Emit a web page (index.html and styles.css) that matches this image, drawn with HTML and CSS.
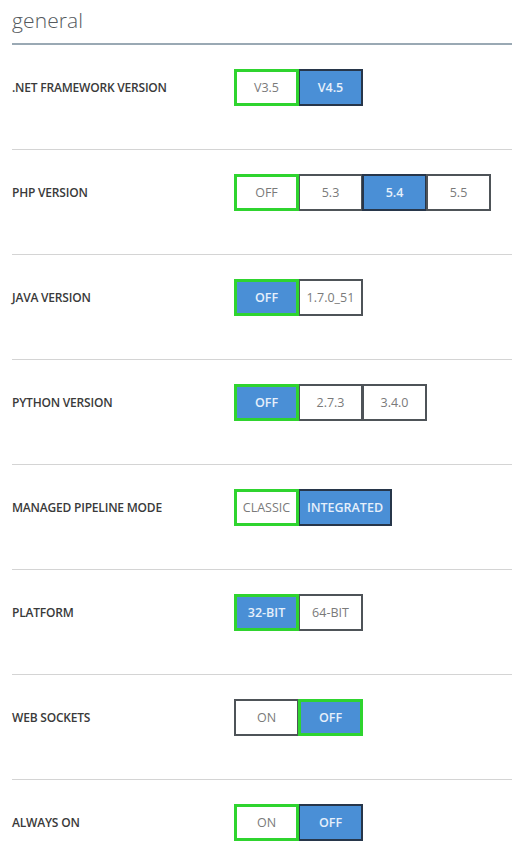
FILE: index.html
```html
<!DOCTYPE html>
<html>
<head>
<meta charset="utf-8">
<link rel="stylesheet" href="styles.css">
</head>
<body>
<div class="panel">
  <h1 class="title">general</h1>
  <div class="row">
    <div class="label">.NET FRAMEWORK VERSION</div>
    <div class="group">
      <span class="opt focus">V3.5</span><span class="opt on">V4.5</span>
    </div>
  </div>
  <div class="row">
    <div class="label">PHP VERSION</div>
    <div class="group">
      <span class="opt focus">OFF</span><span class="opt">5.3</span><span class="opt on">5.4</span><span class="opt">5.5</span>
    </div>
  </div>
  <div class="row">
    <div class="label">JAVA VERSION</div>
    <div class="group">
      <span class="opt on focus">OFF</span><span class="opt">1.7.0_51</span>
    </div>
  </div>
  <div class="row">
    <div class="label">PYTHON VERSION</div>
    <div class="group">
      <span class="opt on focus">OFF</span><span class="opt">2.7.3</span><span class="opt">3.4.0</span>
    </div>
  </div>
  <div class="row">
    <div class="label">MANAGED PIPELINE MODE</div>
    <div class="group">
      <span class="opt focus">CLASSIC</span><span class="opt on wide">INTEGRATED</span>
    </div>
  </div>
  <div class="row">
    <div class="label">PLATFORM</div>
    <div class="group">
      <span class="opt on focus">32-BIT</span><span class="opt">64-BIT</span>
    </div>
  </div>
  <div class="row">
    <div class="label">WEB SOCKETS</div>
    <div class="group">
      <span class="opt">ON</span><span class="opt on focus">OFF</span>
    </div>
  </div>
  <div class="row last">
    <div class="label">ALWAYS ON</div>
    <div class="group">
      <span class="opt focus">ON</span><span class="opt on">OFF</span>
    </div>
  </div>
</div>
</body>
</html>
```
FILE: styles.css
```css
html, body {
  margin: 0;
  padding: 0;
  background: #ffffff;
}
.panel {
  width: 500px;
  margin-left: 12px;
  font-family: "Open Sans", "Liberation Sans", sans-serif;
}
.title {
  margin: 0;
  height: 45px;
  box-sizing: border-box;
  padding-top: 6px;
  font-size: 21px;
  font-weight: 300;
  line-height: 28px;
  color: #555a5e;
  border-bottom: 2px solid #9aa9b4;
  letter-spacing: 0.1px;
}
.row {
  display: flex;
  align-items: center;
  padding: 24px 0 43px 0;
  border-bottom: 1px solid #d4d4d4;
}
.row.last {
  border-bottom: none;
}
.label {
  width: 222px;
  font-size: 12px;
  font-weight: 600;
  color: #3a3a3a;
  letter-spacing: -0.2px;
}
.group {
  display: flex;
}
.opt {
  box-sizing: border-box;
  width: 65px;
  height: 37px;
  display: flex;
  align-items: center;
  justify-content: center;
  font-size: 12.5px;
  color: #7a7a7a;
  background: #fff;
  border: 2px solid #4e5358;
  margin-right: -1px;
  position: relative;
}
.opt.on {
  background: #4a8fd6;
  color: #e6f0fb;
  border-color: #27364a;
  font-weight: 600;
}
.opt.focus {
  border: 3px solid #2fd42f;
  z-index: 1;
}
.opt.wide {
  width: 94px;
}
```
